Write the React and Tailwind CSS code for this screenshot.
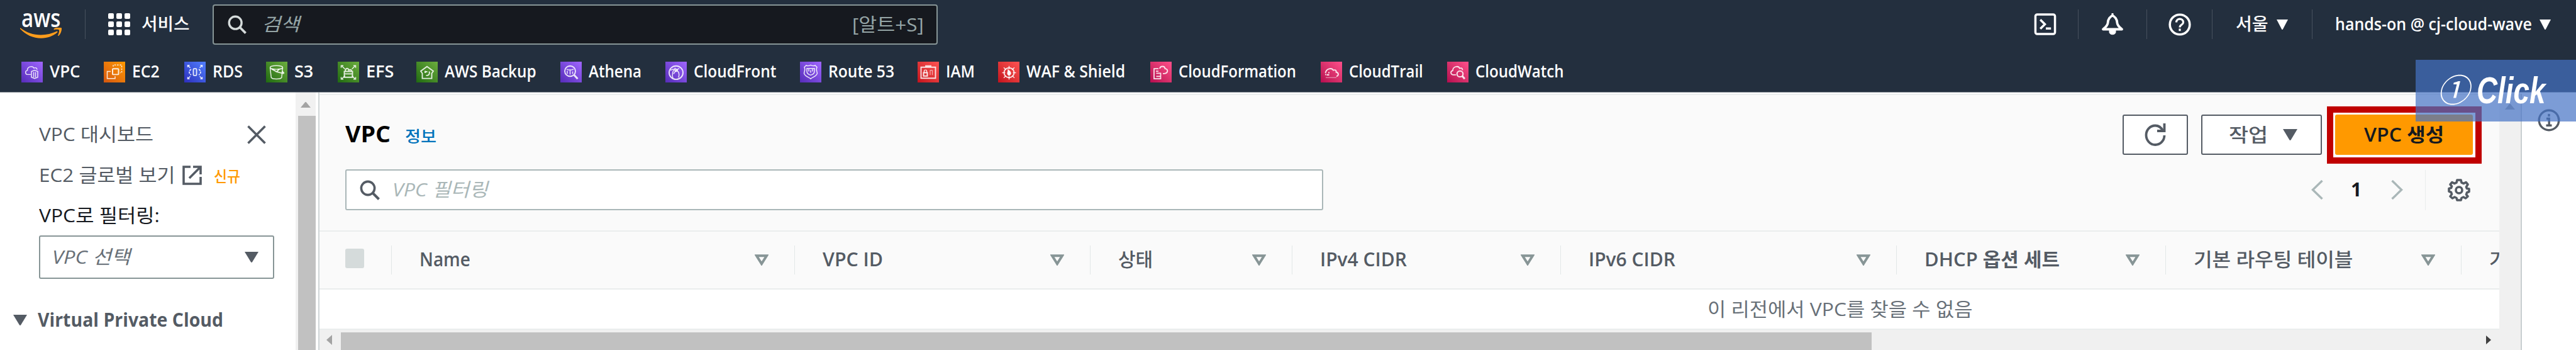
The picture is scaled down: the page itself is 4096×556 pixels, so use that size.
import React, { useLayoutEffect, useRef, useState } from "react";

/* Text that is condensed or stretched to fill the width of its box */
function Fit({ className = "", children }) {
  const box = useRef(null);
  const text = useRef(null);
  const [scale, setScale] = useState(1);
  useLayoutEffect(() => {
    const measure = () => {
      if (box.current && text.current && text.current.offsetWidth) {
        setScale(box.current.clientWidth / text.current.offsetWidth);
      }
    };
    measure();
    if (document.fonts) document.fonts.ready.then(measure);
  }, []);
  return (
    <span ref={box} className={`flex shrink-0 whitespace-nowrap leading-none ${className}`}>
      <span ref={text} className="block shrink-0 origin-left" style={{ transform: `scaleX(${scale})` }}>
        {children}
      </span>
    </span>
  );
}

const Divider = ({ className = "" }) => <span className={`h-[47px] w-px shrink-0 bg-[#47505d] ${className}`} />;

const Down = ({ className = "" }) => (
  <svg viewBox="0 0 20 16" preserveAspectRatio="none" className={`shrink-0 ${className}`}>
    <path d="M0 0h20L11 15.4Q10 16.6 9 15.4Z" fill="currentColor" />
  </svg>
);

const Search = ({ className = "" }) => (
  <svg viewBox="0 0 32 32" fill="none" stroke="currentColor" strokeWidth="3.6" className={`shrink-0 ${className}`}>
    <circle cx="13" cy="13" r="10.6" />
    <path d="M20.5 20.5L30.5 30.5" strokeWidth="4" />
  </svg>
);

/* The wordmark over its smile-shaped arrow */
const AwsLogo = ({ className = "" }) => (
  <div className={`flex shrink-0 flex-col ${className}`}>
    <Fit className="ml-[2px] h-[26px] w-[62px] items-end pb-[1px] text-[40px] font-semibold">
      <span className="block h-[31px] leading-[31px]">aws</span>
    </Fit>
    <svg viewBox="0 28 66 17" className="h-[17px] w-[66px]">
      <path d="M.6 28.6C10 36 21 39.500 33 39.500c9 0 18-2.300 25-5.700 1.300-.6 2.200.8 1.100 1.700C53 41 43.500 44.700 33.400 44.700 20.800 44.700 9 39.500.2 30c-.7-.8-.3-1.900.4-1.400z" fill="#ff9d1c" />
      <path d="M54 29.400c3.400-2.300 10.700-2.400 11.700-1.100s-.3 8.700-4.300 12.400c-.8.6-1.500.3-1.200-.6 1-2.600 2.500-7.300 1.700-8.500-.9-1.200-5.500-.7-7.700-.4-.9.100-1.100-1.200-.2-1.800z" fill="#ff9d1c" />
    </svg>
  </div>
);

const glyphs = {
  VPC: (<><path d="M15 21H9.500C6 20.500 5.500 15 9.500 14.300 9 8.500 17.500 5.500 20 10.500c3-1.500 4.500 0 5 2.500" /><path d="M21 14l5 2v9.500l-5 2-5-2V16zM19.500 17v8.500M22.500 17v8.500" /></>),
  EC2: (<><rect x="14" y="11.500" width="9.500" height="9.500" rx="1" strokeWidth="2" /><path d="M15 8V5.500h13.500V18H26" strokeDasharray="2.500 1.800" /><path d="M11 16H5.500v11.500H18V24" /></>),
  RDS: (<><rect x="14.500" y="11.500" width="5" height="11" rx="1" strokeWidth="1.900" /><path d="M11 12.500c-4 2-4 7 0 9M23 12.500c4 2 4 7 0 9" strokeDasharray="3.500 1.200" strokeWidth="1.800" /><path d="M5.500 6l4 4M5.500 9V6h3M28.500 6l-4 4M28.500 9V6h-3M5.500 28l4-4M5.500 25v3h3M28.500 28l-4-4M28.500 25v3h-3" /></>),
  S3: (<><ellipse cx="16.500" cy="9.500" rx="10" ry="3" /><path d="M6.500 10l1.800 16c2 3 14.500 3 16.500 0l1.700-16" /><path d="M9 12l8 4.500M21 12l-4 4.500 9 2.500c4 .5 2-2-1-3" strokeWidth="1.900" /></>),
  EFS: (<><path d="M6.500 7l5 5M27.500 7l-5 5M6.500 28l5-5M27.500 28l-5-5" /><path d="M5.500 10V6.500H9M28.500 10V6.500H25M5.500 25v3.500H9M28.500 25v3.500H25" /><path d="M10.500 16h13v9.500h-13zM12 16c0-6 5-6.500 5.500-2 3-2 5 0 4.500 2M10 20h14" strokeWidth="1.900" /></>),
  Backup: (<><path d="M17 8L27 15.500 24.500 19V27.500H9.500V19L7 15.500z" strokeWidth="1.900" /><path d="M14 18.500v-3.500M14 16.500h3.500M20.500 16c1.500 4-1 7-5 6.500" strokeWidth="2" /></>),
  Athena: (<><circle cx="15.500" cy="15.500" r="8.500" strokeWidth="1.900" /><path d="M22 22l5.500 6" strokeWidth="3" /><path d="M10 12c2 2 9 2 11 0M11 15v5M15.500 12.500V21M19.500 16v4" /></>),
  CloudFront: (<><circle cx="17" cy="18" r="11" strokeWidth="1.900" /><path d="M12 27c-2-7 0-13 4-17M8 14l5-2M17 14c4 1 6 6 4 12M13 20l4-6 5-3" /><circle cx="17" cy="14" r="2" /></>),
  Route53: (<><path d="M7 9l3-3c2 1.500 4 1 7-.5 3 1.500 5 2 7 .5l3 3c-2 4 0 7 .5 10-1 5-7 6-10.500 9C13.500 25 7.500 24 6.500 19 7 16 9 13 7 9z" /><path d="M11 11h12v5c0 4-3 5-6 6-3-1-6-2-6-6zM14 12v4M17 14v4M20 12v4" /></>),
  IAM: (<><path d="M5.500 9h23v18h-23zM13 9V7h8v2" strokeWidth="1.900" /><rect x="9.500" y="18" width="6" height="5.500" strokeWidth="2.100" /><path d="M10.500 18v-3c0-2 4-2 4 0v3" /><path d="M20 14h3.500M23.500 14v8M20 14v8" strokeWidth="1.200" opacity=".7" /></>),
  WAF: (<><circle cx="17.500" cy="18" r="8" strokeWidth="1.900" /><path d="M17.500 7v5M17.500 24v5M6.500 18h5M23.500 18h5M9 9.500l3.500 3.500M26 9.500L22.500 13M9 26.500l3.500-3.500M26 26.500L22.500 23" /><path d="M17.500 22.500c-5-3-1-5-1.500-9 4 3 6 6 1.500 9z" fill="#fff" /></>),
  CloudFormation: (<><path d="M13 11.500H6v16.500h10.500V19H9.500M9 15.500h4M9.500 24h7M6.500 28h10" strokeWidth="1.800" /><path d="M15 11.500c1-5 8-5 8.500 0 5 .5 5.500 7-1 8H20" strokeWidth="1.900" /></>),
  CloudTrail: (<><path d="M7.500 18.500C9 11 17.500 9.500 20 14c4-1.500 5 1 4.500 3 4.500 1 4.500 6 .5 7" strokeWidth="1.900" /><path d="M7 21h1.500M12 18h2M9.500 21.500h4" strokeWidth="2.200" /><path d="M8 26h17" strokeWidth="1.200" opacity=".6" /></>),
  CloudWatch: (<><path d="M14 21.500H9.500C5 20.500 5 15.500 9 14.500c0-7 9-8.500 11-3.500 3.500-1.500 4.500.5 4.500 3" strokeWidth="1.800" /><circle cx="20.500" cy="20" r="4.800" strokeWidth="2.100" /><path d="M24 23.500l4 4.500" strokeWidth="3" /></>),
};

const services = [
  { g: "VPC", label: "VPC", item: "w-[131px]", text: "w-[49px]", bg: "from-[#562bb8] to-[#a166ff]" },
  { g: "EC2", label: "EC2", item: "w-[128px]", text: "w-[44px]", bg: "from-[#d4570f] to-[#ff9900]" },
  { g: "RDS", label: "RDS", item: "w-[130px]", text: "w-[48px]", bg: "from-[#2e2dbc] to-[#527fff]" },
  { g: "S3", label: "S3", item: "w-[114px]", text: "w-[30px]", bg: "from-[#1e6a10] to-[#6cae3e]" },
  { g: "EFS", label: "EFS", item: "w-[125px]", text: "w-[44px]", bg: "from-[#1e6a10] to-[#6cae3e]" },
  { g: "Backup", label: "AWS Backup", item: "w-[229px]", text: "w-[146px]", bg: "from-[#1e6a10] to-[#6cae3e]" },
  { g: "Athena", label: "Athena", item: "w-[167px]", text: "w-[84px]", bg: "from-[#562bb8] to-[#a166ff]" },
  { g: "CloudFront", label: "CloudFront", item: "w-[214px]", text: "w-[131px]", bg: "from-[#562bb8] to-[#a166ff]" },
  { g: "Route53", label: "Route 53", item: "w-[187px]", text: "w-[105px]", bg: "from-[#562bb8] to-[#a166ff]" },
  { g: "IAM", label: "IAM", item: "w-[128px]", text: "w-[46px]", bg: "from-[#c4101c] to-[#ff5252]" },
  { g: "WAF", label: "WAF & Shield", item: "w-[242px]", text: "w-[157px]", bg: "from-[#c4101c] to-[#ff5252]" },
  { g: "CloudFormation", label: "CloudFormation", item: "w-[271px]", text: "w-[187px]", bg: "from-[#b5094f] to-[#ff4f8b]" },
  { g: "CloudTrail", label: "CloudTrail", item: "w-[201px]", text: "w-[118px]", bg: "from-[#b5094f] to-[#ff4f8b]" },
  { g: "CloudWatch", label: "CloudWatch", item: "w-[200px]", text: "w-[141px]", bg: "from-[#b5094f] to-[#ff4f8b]" },
];

const columns = [
  { label: "Name", cell: "w-[641px]", text: "w-[81px] font-semibold" },
  { label: "VPC ID", cell: "w-[470px]", text: "w-[96px] font-semibold" },
  { label: "상태", cell: "w-[321px]", text: "w-[55px] font-medium" },
  { label: "IPv4 CIDR", cell: "w-[427px]", text: "w-[138px] font-semibold" },
  { label: "IPv6 CIDR", cell: "w-[534px]", text: "w-[138px] font-semibold" },
  { label: "DHCP 옵션 세트", cell: "w-[428px]", text: "w-[215px] font-semibold" },
  { label: "기본 라우팅 테이블", cell: "w-[470px]", text: "w-[253px] font-medium" },
];

function Header() {
  return (
    <header className="flex h-[147px] shrink-0 flex-col border-b border-[#7f868f] bg-[#232f3e] text-white">
      <div className="flex h-[77px] items-center pr-[40px]">
        <AwsLogo className="ml-[32px] mt-[1px] h-[43px] w-[66px]" />
        <Divider className="ml-[37px]" />
        <div className="ml-[36px] grid h-[35px] w-[35px] grid-cols-3 gap-[4px]">
          {Array.from({ length: 9 }, (_, i) => (
            <span key={i} className="rounded-[2px] bg-white" />
          ))}
        </div>
        <Fit className="ml-[18px] w-[77px] pb-[3px] text-[27px] font-medium">서비스</Fit>
        <div className="ml-[36px] flex h-[64px] w-[1153px] items-center rounded-[4px] border-2 border-[#879596] bg-[#16191f] pl-[22px] pr-[20px]">
          <Search className="h-[30px] w-[30px] text-[#d5dbdb]" />
          <Fit className="ml-[24px] w-[60px] pb-[2px] text-[29px] italic text-[#95a5a6]">검색</Fit>
          <Fit className="ml-auto w-[114px] text-[29px] text-[#95a5a6]">[알트+S]</Fit>
        </div>
        <svg viewBox="0 0 36 36" fill="none" stroke="currentColor" strokeWidth="3.600" className="ml-auto h-[35px] w-[36px] shrink-0">
          <rect x="2" y="2" width="32" height="32" rx="3" />
          <path d="M10 10.500l7.500 7.500L10 25.500M19 25h8.500" />
        </svg>
        <Divider className="ml-[34px]" />
        <svg viewBox="0 0 36 36" fill="none" stroke="currentColor" strokeWidth="3.800" strokeLinejoin="round" className="ml-[36px] h-[36px] w-[36px] shrink-0">
          <path d="M18 3.500c-4 2.500-7 5-7.500 12C10 20 7 22 3 25.500h30c-4-3.500-7-5.500-7.500-10-.5-7-3.500-9.500-7.500-12z" />
          <path d="M13 27v3c0 5 10 5 10 0v-3z" fill="currentColor" strokeWidth="1" />
          <path d="M18 0v4" strokeWidth="3" />
        </svg>
        <Divider className="ml-[36px]" />
        <svg viewBox="0 0 36 36" fill="none" stroke="currentColor" strokeWidth="3.600" className="ml-[34px] h-[36px] w-[36px] shrink-0">
          <circle cx="18" cy="18" r="15.800" />
          <path d="M12.500 14.500c0-7.500 11-7 11 0 0 4-5.500 3.500-5.500 8M18 24.500v3.800" strokeWidth="3.200" />
        </svg>
        <Divider className="ml-[33px]" />
        <Fit className="ml-[37px] w-[52px] pb-[2px] text-[27px] font-medium">서울</Fit>
        <Down className="ml-[13px] h-[16px] w-[18px]" />
        <Divider className="ml-[38px]" />
        <Fit className="ml-[36px] w-[313px] pb-[2px] text-[27px] font-semibold">hands-on @ cj-cloud-wave</Fit>
        <Down className="ml-[12px] h-[16px] w-[18px]" />
      </div>
      <nav className="flex h-[69px] items-center pl-[34px] pt-[6px]">
        {services.map((s) => (
          <div key={s.label} className={`flex shrink-0 items-center ${s.item}`}>
            <svg viewBox="0 0 34 34" preserveAspectRatio="none" fill="none" stroke="#fff" strokeOpacity=".85" strokeWidth="1.500" className={`h-[33px] w-[34px] shrink-0 bg-linear-to-tr ${s.bg}`}>
              {glyphs[s.g]}
            </svg>
            <Fit className={`ml-[11px] pb-[4px] text-[27px] font-semibold ${s.text}`}>{s.label}</Fit>
          </div>
        ))}
      </nav>
    </header>
  );
}

function Sidebar() {
  return (
    <aside className="flex w-[508px] shrink-0 border-r-2 border-[#d0d6d8] bg-white">
      <div className="flex w-[470px] flex-col pl-[62px] pt-[35px] text-[30px] text-[#545b64]">
        <div className="flex h-[64px] items-center">
          <Fit className="w-[182px] pb-[2px]">VPC 대시보드</Fit>
          <svg viewBox="0 0 30 30" stroke="currentColor" strokeWidth="3.600" className="ml-[149px] h-[30px] w-[30px]">
            <path d="M1.500 1.500l27 27M28.500 1.500l-27 27" />
          </svg>
        </div>
        <div className="flex h-[64px] items-center">
          <Fit className="w-[216px]">EC2 글로벌 보기</Fit>
          <svg viewBox="0 0 31 31" fill="none" stroke="currentColor" strokeWidth="3.600" className="ml-[12px] h-[31px] w-[31px]">
            <path d="M13 2H2v27h27V18" />
            <path d="M17 2h12v12M29 2L11 20" />
          </svg>
          <Fit className="ml-[19px] w-[42px] pt-[4px] text-[24px] font-medium text-[#ff9900]">신규</Fit>
        </div>
        <div className="flex h-[64px] items-center text-[#16191f]">
          <Fit className="w-[192px]">VPC로 필터링:</Fit>
        </div>
        <div className="flex h-[69px] w-[374px] items-center justify-between rounded-[3px] border-2 border-[#879596] pl-[19px] pr-[23px]">
          <Fit className="w-[124px] pb-[1px] italic text-[#687078]">VPC 선택</Fit>
          <Down className="h-[17px] w-[22px]" />
        </div>
        <div className="-ml-[41px] mt-[33px] flex h-[64px] items-center">
          <Down className="h-[17px] w-[22px]" />
          <Fit className="ml-[17px] w-[295px] font-bold">Virtual Private Cloud</Fit>
        </div>
      </div>
      <div className="flex w-[32px] flex-col items-center bg-[#f1f1f1]">
        <Down className="mt-[15px] h-[9px] w-[16px] rotate-180 text-[#a3a3a3]" />
        <div className="ml-[4px] mt-[13px] w-[28px] grow bg-[#c1c1c1]" />
      </div>
    </aside>
  );
}

function Main() {
  return (
    <main className="flex w-[3466px] shrink-0 flex-col overflow-hidden">
      <div className="mt-[2px] flex h-[217px] shrink-0 flex-col border-t-2 border-[#eaeded] bg-[#fafafa] pl-[41px] pr-[42px] pt-[31px]">
        <div className="flex h-[64px] shrink-0 items-center">
          <Fit className="w-[72px] pb-[3px] text-[36px] font-bold text-black">VPC</Fit>
          <Fit className="ml-[23px] w-[50px] pt-[5px] text-[25px] font-medium text-[#0073bb]">정보</Fit>
          <button className="ml-auto flex h-[64px] w-[104px] items-center justify-center rounded-[3px] border-2 border-[#545b64] bg-white text-[#545b64]">
            <svg viewBox="0 0 34 36" fill="none" stroke="currentColor" strokeWidth="3.800" className="h-[36px] w-[34px]">
              <path d="M31.500 19c0 8.500-6.500 15-14.500 15S2.500 27 2.500 18.500 9 3.500 17 3.500c5.500 0 9.500 3 12.500 8.500" />
              <path d="M31.500 0v12H20" />
            </svg>
          </button>
          <button className="ml-[21px] flex h-[64px] w-[192px] items-center rounded-[3px] border-2 border-[#545b64] bg-white pl-[42px] text-[#545b64]">
            <Fit className="w-[62px] pb-[1px] text-[30px] font-medium">작업</Fit>
            <Down className="ml-[24px] h-[18px] w-[23px]" />
          </button>
          <div className="relative ml-[21px] h-[64px] w-[219px]">
            <span className="absolute -bottom-[14px] -left-[13px] -right-[14px] -top-[13px] border-[10px] border-[#c00000] bg-white" />
            <button className="relative flex h-full w-full items-center justify-center rounded-[3px] bg-[#ff9900] text-[#16191f]">
              <Fit className="w-[127px] pb-[1px] text-[30px] font-semibold">VPC 생성</Fit>
            </button>
          </div>
        </div>
        <div className="mt-[23px] flex h-[65px] shrink-0 items-center">
          <div className="flex h-[65px] w-[1555px] items-center rounded-[3px] border-2 border-[#aab7b8] bg-white pl-[21px]">
            <Search className="h-[32px] w-[32px] text-[#545b64]" />
            <Fit className="ml-[20px] w-[152px] pb-[1px] text-[30px] italic text-[#aab7b8]">VPC 필터링</Fit>
          </div>
          <svg viewBox="0 0 19 31" fill="none" stroke="#aab7b8" strokeWidth="3.400" className="ml-auto h-[31px] w-[19px]">
            <path d="M17.500 1L2.500 15.500l15 14.500" />
          </svg>
          <Fit className="ml-[44px] w-[17px] pb-[1px] text-[30px] font-bold text-[#16191f]">1</Fit>
          <svg viewBox="0 0 19 31" fill="none" stroke="#aab7b8" strokeWidth="3.400" className="ml-[47px] h-[31px] w-[19px]">
            <path d="M1.500 1l15 14.500L1.500 30" />
          </svg>
          <span className="ml-[35px] h-[64px] w-px bg-[#eaeded]" />
          <svg viewBox="0 0 36 36" fill="none" stroke="#545b64" strokeWidth="3.600" strokeLinejoin="round" className="mr-[4px] ml-[35px] h-[36px] w-[36px]">
            <path d="M15 2h6l1 4 3.500 1.500L29 5.500 32 9l-2.500 4 1 2.500 3.500.5v4.500l-3.500 1.500-1 3L32 28l-3.500 3-3.500-2-3 1.500-1 3.500h-6l-1-3.500-3-1.500-3.500 2L4 28l2.500-3.500-1-3L2 20v-4.500l3.500-1 1-2.500L4 9l3-3.500 3.500 2L14 6z" />
            <circle cx="18" cy="18" r="5" />
          </svg>
        </div>
      </div>
      <div className="flex h-[94px] shrink-0 items-center border-y-2 border-[#eaeded] bg-[#fafafa] pl-[41px] text-[30px] text-[#545b64]">
        <span className="mb-[5px] h-[31px] w-[30px] shrink-0 rounded-[3px] bg-[#d5dbdb]" />
        <span className="w-[43px] shrink-0" />
        {columns.map((c) => (
          <div key={c.label} className={`flex h-[46px] shrink-0 items-center border-l border-[#e2e7e7] pl-[44px] pr-[41px] ${c.cell}`}>
            <Fit className={`pb-[3px] ${c.text}`}>{c.label}</Fit>
            <svg viewBox="0 0 22 18" fill="none" stroke="#879596" strokeWidth="4" className="ml-auto h-[18px] w-[22px] shrink-0">
              <path d="M3 2.200h16L11 15z" />
            </svg>
          </div>
        ))}
        <div className="flex h-[46px] shrink-0 items-center border-l border-[#e2e7e7] pl-[44px]">
          <Fit className="w-[28px] pb-[3px] font-medium">기</Fit>
        </div>
      </div>
      <div className="flex h-[62px] shrink-0 items-center bg-white pl-[2207px]">
        <Fit className="w-[421px] pb-[1px] text-[30px] text-[#687078]">이 리전에서 VPC를 찾을 수 없음</Fit>
      </div>
      <div className="flex grow items-center border-t-2 border-[#eaeded] bg-[#f0f0f0]">
        <svg viewBox="0 0 9 16" className="ml-[11px] h-[16px] w-[9px] shrink-0 fill-[#a3a3a3]">
          <path d="M9 0v16L0 8z" />
        </svg>
        <div className="ml-[14px] mt-[4px] w-[2434px] self-stretch bg-[#c1c1c1]" />
        <svg viewBox="0 0 9 16" className="ml-auto mr-[13px] h-[16px] w-[8px] shrink-0 fill-[#404040]">
          <path d="M0 0v16L9 8z" />
        </svg>
      </div>
    </main>
  );
}

export default function App() {
  return (
    <div className="relative flex h-[556px] w-[4096px] flex-col overflow-hidden bg-white font-['Open_Sans','Noto_Sans_CJK_KR',sans-serif]">
      <Header />
      <div className="flex min-h-0 grow">
        <Sidebar />
        <Main />
        <div className="mt-[2px] flex w-[36px] shrink-0 flex-col items-center border-r-2 border-[#c8ced0] bg-[#f0f0f0]">
          <Down className="mt-[16px] h-[9px] w-[16px] rotate-180 text-[#a3a3a3]" />
        </div>
        <div className="flex grow justify-center bg-white pt-[26px]">
          <svg viewBox="0 0 36 36" fill="none" stroke="#545b64" strokeWidth="3.400" className="h-[36px] w-[36px]">
            <circle cx="18" cy="18" r="15.800" />
            <path d="M18 8v4M14 15.500h4.200V26M13.500 26.200h9" />
          </svg>
        </div>
      </div>
      <div className="absolute left-[3841px] top-[95px] flex h-[98px] w-[255px] items-center bg-[#4472c4]/70 pl-[34px] text-white">
        <Fit className="w-[51px] pb-[4px] text-[51px] font-normal italic">①</Fit>
        <Fit className="ml-[12px] w-[109px] pb-[1px] font-['Liberation_Sans',sans-serif] text-[60px] font-bold italic">Click</Fit>
      </div>
    </div>
  );
}
